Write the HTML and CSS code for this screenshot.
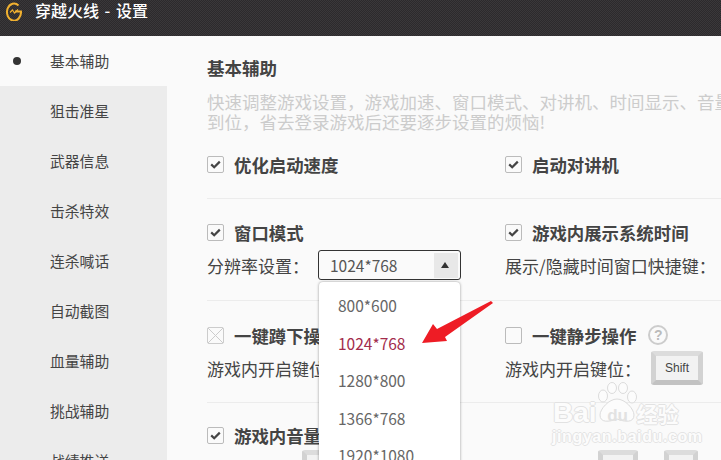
FILE: index.html
```html
<!DOCTYPE html>
<html lang="zh">
<head>
<meta charset="utf-8">
<title>穿越火线 - 设置</title>
<link rel="stylesheet" href="styles.css">
</head>
<body>
<div class="app">
  <header class="titlebar">
    <svg class="logo" width="16" height="20" viewBox="0 0 16 20"><path d="M12.5 4.5A7 8.6 0 1 0 15 10.5L9 10.5" fill="none" stroke="#f0b030" stroke-width="2"/><path d="M4 11.5 6.5 9 8.5 12 12 8.5" fill="none" stroke="#f0b030" stroke-width="1.2"/></svg>
    <span class="apptitle">穿越火线 - 设置</span>
  </header>
  <div class="body">
    <nav class="side">
      <div class="nav active"><i class="dot"></i>基本辅助</div>
      <div class="nav">狙击准星</div>
      <div class="nav">武器信息</div>
      <div class="nav">击杀特效</div>
      <div class="nav">连杀喊话</div>
      <div class="nav">自动截图</div>
      <div class="nav">血量辅助</div>
      <div class="nav">挑战辅助</div>
      <div class="nav">战绩推送</div>
    </nav>
    <main class="main">
      <h1 class="heading">基本辅助</h1>
      <p class="desc">快速调整游戏设置，游戏加速、窗口模式、对讲机、时间显示、音量<br>到位，省去登录游戏后还要逐步设置的烦恼!</p>
      <section class="row row1">
        <div class="cell"><div class="opt"><span class="check on"><svg width="11" height="9" viewBox="0 0 11 9"><path d="M1.2 4.4 4.2 7.2 9.8 1.6" fill="none" stroke="#444" stroke-width="2.2"/></svg></span><b>优化启动速度</b></div></div>
        <div class="cell"><div class="opt"><span class="check on"><svg width="11" height="9" viewBox="0 0 11 9"><path d="M1.2 4.4 4.2 7.2 9.8 1.6" fill="none" stroke="#444" stroke-width="2.2"/></svg></span><b>启动对讲机</b></div></div>
      </section>
      <section class="row row2">
        <div class="cell">
          <div class="opt"><span class="check on"><svg width="11" height="9" viewBox="0 0 11 9"><path d="M1.2 4.4 4.2 7.2 9.8 1.6" fill="none" stroke="#444" stroke-width="2.2"/></svg></span><b>窗口模式</b></div>
          <div class="sub"><span class="label">分辨率设置：</span>
            <div class="select"><span class="value">1024*768</span><span class="caret"></span></div>
          </div>
        </div>
        <div class="cell">
          <div class="opt"><span class="check on"><svg width="11" height="9" viewBox="0 0 11 9"><path d="M1.2 4.4 4.2 7.2 9.8 1.6" fill="none" stroke="#444" stroke-width="2.2"/></svg></span><b>游戏内展示系统时间</b></div>
          <div class="sub"><span class="label">展示/隐藏时间窗口快捷键：</span></div>
        </div>
      </section>
      <section class="row row3">
        <div class="cell">
          <div class="opt"><span class="check off"><svg width="15" height="15" viewBox="0 0 15 15"><path d="M0 0 15 15M15 0 0 15" stroke="#ccc" stroke-width="1"/></svg></span><b>一键蹲下操作</b></div>
          <div class="sub"><span class="label">游戏内开启键位：</span></div>
        </div>
        <div class="cell">
          <div class="opt"><span class="check"></span><b>一键静步操作</b><span class="help">?</span></div>
          <div class="sub"><span class="label">游戏内开启键位：</span><span class="key">Shift</span></div>
        </div>
      </section>
      <section class="row row4">
        <div class="cell">
          <div class="opt"><span class="check on"><svg width="11" height="9" viewBox="0 0 11 9"><path d="M1.2 4.4 4.2 7.2 9.8 1.6" fill="none" stroke="#444" stroke-width="2.2"/></svg></span><b>游戏内音量调节</b></div>
          <div class="keys"><span class="key blank k1"></span></div>
        </div>
        <div class="cell">
          <div class="keys right"><span class="key blank k2"></span><span class="key blank k3"></span></div>
        </div>
      </section>
    </main>
  </div>

  <ul class="menu">
    <li>800*600</li>
    <li class="sel">1024*768</li>
    <li>1280*800</li>
    <li>1366*768</li>
    <li>1920*1080</li>
  </ul>

  <svg class="arrow" width="76" height="46" viewBox="0 0 76 46"><polygon points="1,43 12,24 16,29 70,1 72,3 24,37 26,41" fill="#ee1c25"/></svg>

  <div class="mark">
    <svg class="paw" width="40" height="44" viewBox="0 0 40 44"><g fill="#fcfcfc" stroke="#dcdcdc"><ellipse cx="6" cy="14" rx="4.5" ry="6"/><ellipse cx="15" cy="6" rx="4.5" ry="5.5"/><ellipse cx="26" cy="6" rx="4.5" ry="5.5"/><ellipse cx="35" cy="15" rx="4.5" ry="6"/><path d="M20 17C28 17 37 27 37 33 37 41 28 40 20 37 12 40 3 41 3 33 3 27 12 17 20 17Z"/></g></svg>
    <div class="brand"><span>Bai</span><span class="du">du</span><span class="cn">经验</span></div>
    <div class="url">jingyan.baidu.com</div>
  </div>
</div>
</body>
</html>
```
FILE: styles.css
```css
* { box-sizing: border-box; }
html, body { margin: 0; padding: 0; }
body {
  width: 721px;
  height: 460px;
  overflow: hidden;
  font-family: "Noto Sans CJK SC", "Noto Sans", sans-serif;
  color: #444;
}
.app { position: relative; width: 721px; height: 460px; overflow: hidden; background: #fafafa; }

.titlebar {
  height: 36px;
  display: flex;
  align-items: flex-start;
  padding: 1px 0 0 6px;
  background-color: #353335;
  background-image: conic-gradient(#2c2a2c 25%, #3a383a 0 50%, #2c2a2c 0 75%, #3a383a 0);
  background-size: 2px 2px;
}
.apptitle { margin-left: 13px; font-size: 16px; line-height: 19px; word-spacing: 2px; color: #fff; font-weight: 500; }

.body { display: flex; height: 424px; }
.side { width: 167px; flex: none; background: #ececec; }
.nav {
  position: relative;
  height: 50px;
  padding: 14px 0 0 50px;
  font-size: 14.8px;
  line-height: 22px;
  color: #444;
  white-space: nowrap;
}
.nav.active { background: #fafafa; }
.dot { position: absolute; left: 13px; top: 21px; width: 8px; height: 8px; border-radius: 50%; background: #333; }

.main { flex: 1; min-width: 0; padding: 20px 0 0 40px; overflow: hidden; background: #fafafa; }
.heading { margin: 0; font-size: 17.5px; line-height: 24px; font-weight: 700; color: #444; }
.desc {
  margin: 12px 0 0;
  font-size: 17.5px;
  line-height: 20px;
  color: #ccc;
  white-space: nowrap;
}
.row {
  display: grid;
  grid-template-columns: 298px 298px;
  width: 620px;
  border-bottom: 1px solid #ececec;
}
.row1 { height: 60px; margin-top: 7px; padding-top: 15px; }
.row2 { height: 102px; padding-top: 23px; }
.row3 { height: 102px; padding-top: 24px; }
.row4 { height: 80px; padding-top: 22px; border-bottom: 0; }
.cell { min-width: 0; }
.opt { display: flex; align-items: center; height: 20px; }
.opt b { margin-left: 10px; font-size: 17.4px; font-weight: 700; color: #444; white-space: nowrap; }
.check {
  width: 17px;
  height: 17px;
  flex: none;
  display: flex;
  align-items: center;
  justify-content: center;
  border: 1px solid #bbb;
  border-radius: 2px;
  background: #fafafa;
}
.check.off { border-color: #ccc; }
.help {
  width: 20px;
  height: 20px;
  margin-left: 12px;
  border: 2px solid #ccc;
  border-radius: 50%;
  color: #bbb;
  font-family: "Liberation Sans", sans-serif;
  font-size: 14px;
  font-weight: 700;
  line-height: 16px;
  text-align: center;
}
.sub { display: flex; align-items: center; height: 30px; margin-top: 8px; position: relative; }
.label { font-size: 17px; color: #444; white-space: nowrap; }
.select {
  position: absolute;
  left: 111px;
  top: 0;
  width: 143px;
  height: 30px;
  display: flex;
  align-items: center;
  justify-content: space-between;
  padding: 2px 2px 2px 11px;
  border: 1px solid #333;
  border-radius: 3px;
  background: #fafafa;
}
.value { font-size: 15.5px; color: #555; }
.caret {
  position: relative;
  width: 24px;
  height: 25px;
  background: #e8e8e8;
}
.caret::after {
  content: "";
  position: absolute;
  left: 7px;
  top: 9px;
  border: 4.5px solid transparent;
  border-top: 0;
  border-bottom: 6px solid #333;
}
.key {
  display: inline-flex;
  align-items: center;
  justify-content: center;
  flex: none;
  width: 52px;
  height: 34px;
  margin-left: 10px;
  border: 5px solid #d2d2d2;
  border-top-color: #dcdcdc;
  border-bottom-color: #c2c2c2;
  border-radius: 3px;
  background: #f2f2f2;
  font-family: "Liberation Sans", sans-serif;
  font-size: 12px;
  color: #444;
}
.keys { display: flex; margin-top: 5px; }
.keys .key { width: 40px; height: 30px; margin-left: 0; }
.keys .k1 { margin-left: 95px; }
.keys.right { margin-top: 25px; }
.keys .k2 { margin-left: 93px; }
.keys .k3 { margin-left: 26px; width: 34px; }

.menu {
  position: absolute;
  left: 319px;
  top: 282px;
  width: 141px;
  height: 200px;
  margin: 0;
  padding: 5px 0 0 19px;
  list-style: none;
  border-radius: 4px;
  background: #fff;
  box-shadow: 0 0 3px rgba(0, 0, 0, 0.4);
}
.menu li { height: 37.5px; font-size: 15.5px; line-height: 37.5px; color: #666; }
.menu li.sel { color: #a32c4c; }

.arrow { position: absolute; left: 421px; top: 300px; }

.mark { position: absolute; left: 550px; top: 380px; width: 170px; color: #fcfcfc; }
.paw { position: absolute; left: 47px; top: 2px; }
.brand {
  position: absolute;
  left: 3px;
  top: 20px;
  display: flex;
  align-items: center;
  height: 26px;
  font-family: "Liberation Sans", sans-serif;
  font-size: 28px;
  font-weight: 700;
  line-height: 26px;
  text-shadow: 1px 0 0 #e2e2e2, -1px 0 0 #e2e2e2, 0 1px 0 #e2e2e2, 0 -1px 0 #e2e2e2;
}
.du { width: 32px; margin-left: 5px; padding-top: 5px; color: #e2e2e2; font-size: 17px; text-align: center; text-shadow: none; }
.cn { margin-left: 3px; font-family: "Noto Sans CJK SC", sans-serif; font-size: 21px; }
.url {
  position: absolute;
  left: 2px;
  top: 49px;
  font-family: "Liberation Sans", sans-serif;
  font-size: 16px;
  font-weight: 700;
  line-height: 16px;
  letter-spacing: 0.6px;
  text-shadow: 1px 0 0 #e4e4e4, -1px 0 0 #e4e4e4, 0 1px 0 #e4e4e4, 0 -1px 0 #e4e4e4;
}
```
